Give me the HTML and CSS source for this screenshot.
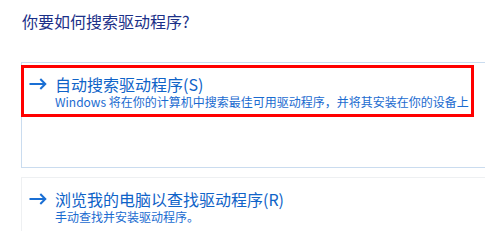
FILE: index.html
```html
<!DOCTYPE html>
<html lang="zh-CN">
<head>
<meta charset="utf-8">
<title>更新驱动程序</title>
<link rel="stylesheet" href="styles.css">
</head>
<body>
<div class="dialog">
  <h1 class="title">你要如何搜索驱动程序?</h1>
  <div class="options">
    <div class="option option-hover">
      <span class="arrow">
        <svg width="18" height="12" viewBox="0 0 18 12"><path d="M0.5 6H16.3M11.3 1L16.3 6L11.3 11" fill="none" stroke="#1a6fd4" stroke-width="2"/></svg>
      </span>
      <div class="texts">
        <div class="label">自动搜索驱动程序(S)</div>
        <div class="desc">Windows 将在你的计算机中搜索最佳可用驱动程序，并将其安装在你的设备上</div>
      </div>
      <div class="highlight"></div>
    </div>
    <div class="option option-plain">
      <span class="arrow">
        <svg width="18" height="12" viewBox="0 0 18 12"><path d="M0.5 6H16.3M11.3 1L16.3 6L11.3 11" fill="none" stroke="#1a6fd4" stroke-width="2"/></svg>
      </span>
      <div class="texts">
        <div class="label">浏览我的电脑以查找驱动程序(R)</div>
        <div class="desc">手动查找并安装驱动程序。</div>
      </div>
    </div>
  </div>
</div>
</body>
</html>
```

FILE: styles.css
```css
html, body {
  margin: 0;
  padding: 0;
  background: #ffffff;
  overflow: hidden;
}

body {
  width: 485px;
  height: 231px;
  font-family: "Segoe UI", "Noto Sans CJK SC", sans-serif;
}

.dialog {
  padding-left: 21px;
}

.title {
  margin: 0 0 0 1px;
  padding-top: 10px;
  font-size: 16px;
  line-height: 22px;
  font-weight: normal;
  color: #1b3088;
}

.options {
  margin-top: 30px;
  display: flex;
  flex-direction: column;
  gap: 9px;
  width: 480px;
}

.option {
  position: relative;
  display: flex;
  align-items: flex-start;
  gap: 8px;
  padding: 11px 0 0 7px;
  border: 1px solid #eef0f2;
  border-bottom: none;
  box-sizing: border-box;
}

.option-hover {
  height: 106px;
  border-color: #cadcef;
  border-bottom: 1px solid #cadcef;
}

.option-plain {
  height: 54px;
}

.arrow {
  display: flex;
  align-items: center;
  height: 20px;
  width: 18px;
  flex: none;
}

.arrow svg {
  display: block;
}

.texts {
  display: flex;
  flex-direction: column;
}

.label {
  font-size: 16px;
  line-height: 20px;
  color: #0f63c8;
  white-space: nowrap;
}

.desc {
  font-size: 12px;
  line-height: 16px;
  color: #1a6bd0;
  white-space: nowrap;
}

.highlight {
  position: absolute;
  top: 2px;
  left: -1px;
  width: 453px;
  height: 52px;
  border: 3px solid #ff0000;
  box-sizing: border-box;
  pointer-events: none;
}
```
